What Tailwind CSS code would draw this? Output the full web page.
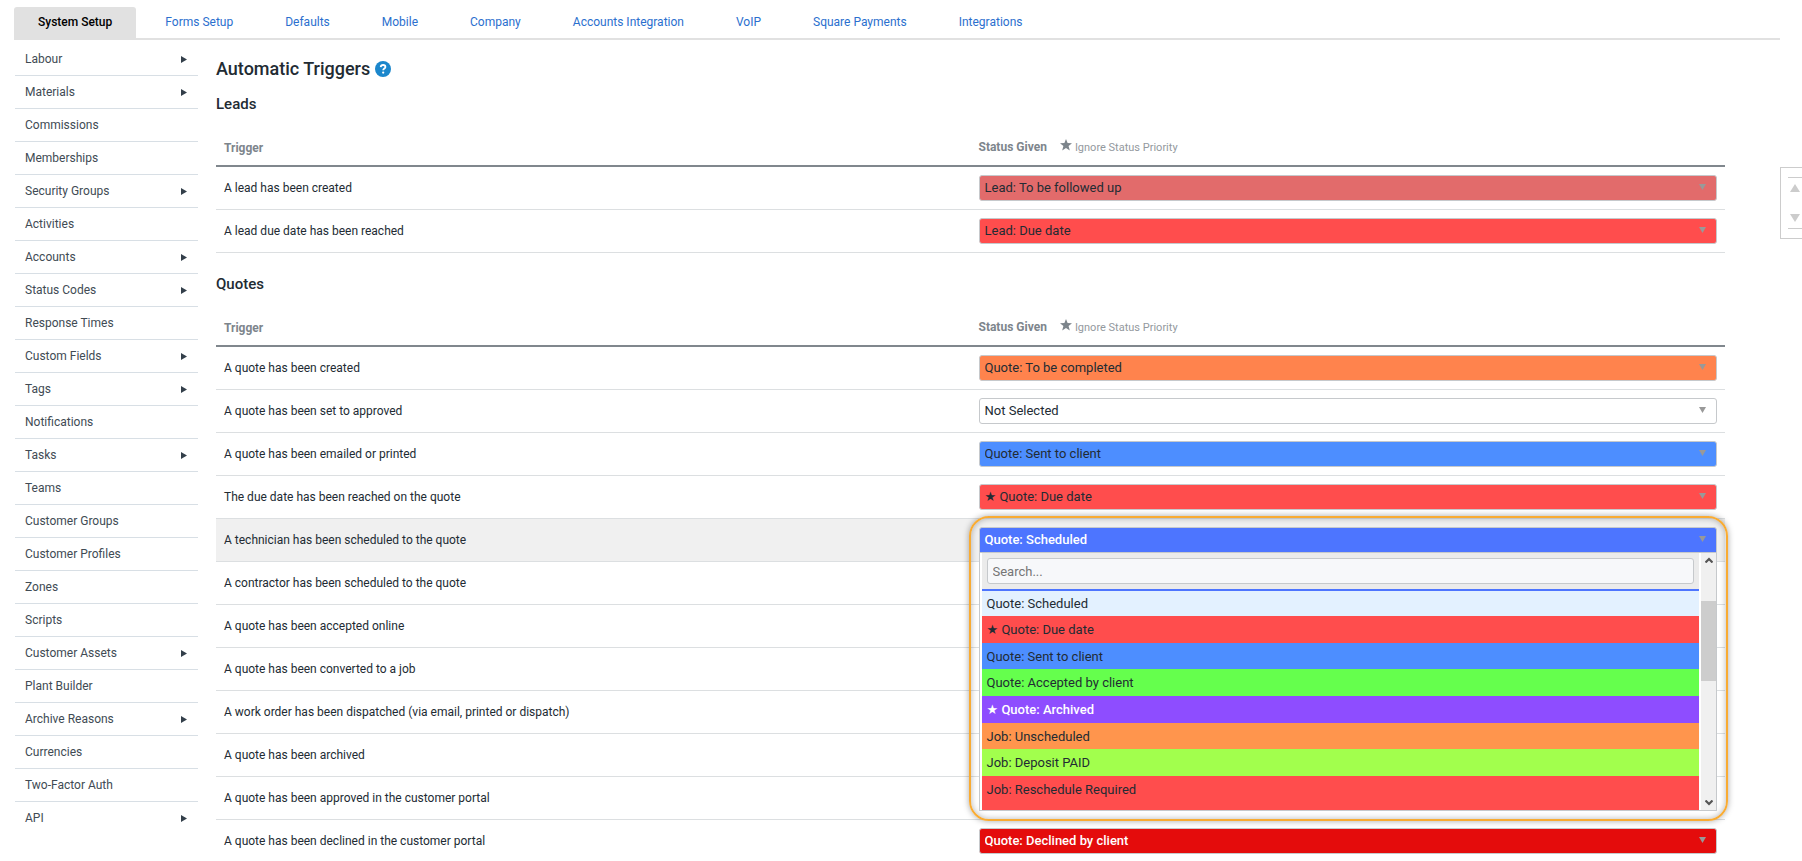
<!DOCTYPE html>
<html lang="en">
<head>
<meta charset="utf-8">
<title>System Setup - Automatic Triggers</title>
<script src="https://cdn.jsdelivr.net/npm/@tailwindcss/browser@4"></script>
</head>
<body class="relative h-screen overflow-hidden bg-white font-[Roboto,'DejaVu_Sans',sans-serif] text-xs text-[#222b33]">
<svg class="hidden">
  <symbol id="down" viewBox="0 0 7 6"><path d="M0 0h7L3.5 6z" fill="#999"/></symbol>
  <symbol id="right" viewBox="0 0 6 7"><path d="M0 0l6 3.5L0 7z" fill="#333f4a"/></symbol>
  <symbol id="star" viewBox="0 0 12 12"><path d="M6 0l1.6 4.1 4.4.2-3.4 2.8L9.8 11.500 6 9 2.200 11.500l1.200-4.400L0 4.300l4.400-.2z" fill="#7d858c"/></symbol>
</svg>

<nav class="mr-[22px] ml-3.5 flex gap-1.5 border-b-2 border-[#e1e1e1] pt-[7px] leading-[31px] text-[#2b6fce]">
  <a href="#" class="rounded-t-[3px] bg-[#e1e1e1] px-6 font-medium text-black">System Setup</a>
  <a href="#" class="px-[23px]">Forms Setup</a>
  <a href="#" class="px-[23px]">Defaults</a>
  <a href="#" class="px-[23px]">Mobile</a>
  <a href="#" class="px-[23px]">Company</a>
  <a href="#" class="px-[23px]">Accounts Integration</a>
  <a href="#" class="px-[23px]">VoIP</a>
  <a href="#" class="px-[23px]">Square Payments</a>
  <a href="#" class="px-[23px]">Integrations</a>
</nav>

<div class="flex">
  <aside class="ml-[15px] w-[183px] shrink-0 pt-[3px] text-[#414b54] [&_a]:flex [&_a]:h-[33px] [&_a]:items-center [&_a]:justify-between [&_a]:border-b [&_a]:border-[#d8dfe5] [&_a]:pr-[11px] [&_a]:pl-2.5 [&_a:last-child]:border-transparent [&_svg]:h-[7px] [&_svg]:w-1.5">
    <a href="#">Labour<svg><use href="#right"/></svg></a>
    <a href="#">Materials<svg><use href="#right"/></svg></a>
    <a href="#">Commissions</a>
    <a href="#">Memberships</a>
    <a href="#">Security Groups<svg><use href="#right"/></svg></a>
    <a href="#">Activities</a>
    <a href="#">Accounts<svg><use href="#right"/></svg></a>
    <a href="#">Status Codes<svg><use href="#right"/></svg></a>
    <a href="#">Response Times</a>
    <a href="#">Custom Fields<svg><use href="#right"/></svg></a>
    <a href="#">Tags<svg><use href="#right"/></svg></a>
    <a href="#">Notifications</a>
    <a href="#">Tasks<svg><use href="#right"/></svg></a>
    <a href="#">Teams</a>
    <a href="#">Customer Groups</a>
    <a href="#">Customer Profiles</a>
    <a href="#">Zones</a>
    <a href="#">Scripts</a>
    <a href="#">Customer Assets<svg><use href="#right"/></svg></a>
    <a href="#">Plant Builder</a>
    <a href="#">Archive Reasons<svg><use href="#right"/></svg></a>
    <a href="#">Currencies</a>
    <a href="#">Two-Factor Auth</a>
    <a href="#">API<svg><use href="#right"/></svg></a>
  </aside>

  <main class="mr-[77px] ml-[18px] grow pt-[15px] [&_table]:w-full [&_table]:table-fixed [&_table]:border-separate [&_table]:border-spacing-0 [&_td]:h-[43px] [&_td]:border-b [&_td]:border-[#dcdfe1] [&_td]:px-2 [&_th]:h-[39px] [&_th]:border-b-2 [&_th]:border-[#80878d] [&_th]:px-2 [&_th]:pt-0.5 [&_th]:text-left [&_th]:font-bold [&_th]:text-[#7d858c] [&_select]:block [&_select]:h-[26px] [&_select]:w-full [&_select]:appearance-none [&_select]:rounded-[3px] [&_select]:border [&_select]:border-[#c6c9cc] [&_select]:pl-[5px] [&_select]:text-[13px] [&_label]:relative [&_label]:block [&_label_svg]:absolute [&_label_svg]:top-[9px] [&_label_svg]:right-[11px] [&_label_svg]:h-1.5 [&_label_svg]:w-[7px]">
    <h1 class="flex items-center gap-[5px] text-lg leading-7 font-medium">Automatic Triggers
      <button type="button" aria-label="Help"><svg class="size-4" viewBox="0 0 16 16"><circle cx="8" cy="8" r="8" fill="#1b87cc"/><path d="M5.700 6.100C5.800 4.700 6.800 4 8.100 4c1.400 0 2.300.8 2.300 1.900 0 1.600-2.200 1.700-2.200 3.400" fill="none" stroke="#fff" stroke-width="1.800"/><circle cx="8.200" cy="11.600" r="1.150" fill="#fff"/></svg></button>
    </h1>

    <section class="mt-[9px]">
      <h2 class="text-[15px] leading-6 font-medium">Leads</h2>
      <table class="mt-3">
        <thead><tr><th>Trigger</th><th><div class="flex items-baseline">Status Given<svg class="ml-[13px] size-3"><use href="#star"/></svg><span class="ml-[3px] text-[11px] leading-4 font-normal text-[#93999e]">Ignore Status Priority</span></div></th></tr></thead>
        <tbody>
          <tr><td>A lead has been created</td><td><label><select aria-label="A lead has been created" class="bg-[#e26b6b]"><option>Lead: To be followed up</option></select><svg><use href="#down"/></svg></label></td></tr>
          <tr><td>A lead due date has been reached</td><td><label><select aria-label="A lead due date has been reached" class="bg-[#ff4d4d]"><option>Lead: Due date</option></select><svg><use href="#down"/></svg></label></td></tr>
        </tbody>
      </table>
    </section>

    <section class="mt-[19px]">
      <h2 class="text-[15px] leading-6 font-medium">Quotes</h2>
      <table class="mt-3">
        <thead><tr><th>Trigger</th><th><div class="flex items-baseline">Status Given<svg class="ml-[13px] size-3"><use href="#star"/></svg><span class="ml-[3px] text-[11px] leading-4 font-normal text-[#93999e]">Ignore Status Priority</span></div></th></tr></thead>
        <tbody>
          <tr><td>A quote has been created</td><td><label><select aria-label="A quote has been created" class="bg-[#ff834d]"><option>Quote: To be completed</option></select><svg><use href="#down"/></svg></label></td></tr>
          <tr><td>A quote has been set to approved</td><td><label><select aria-label="A quote has been set to approved" class="bg-white"><option>Not Selected</option></select><svg><use href="#down"/></svg></label></td></tr>
          <tr><td>A quote has been emailed or printed</td><td><label><select aria-label="A quote has been emailed or printed" class="bg-[#4d8eff]"><option>Quote: Sent to client</option></select><svg><use href="#down"/></svg></label></td></tr>
          <tr><td>The due date has been reached on the quote</td><td><label><select aria-label="The due date has been reached on the quote" class="bg-[#ff4d4d]"><option>★ Quote: Due date</option></select><svg><use href="#down"/></svg></label></td></tr>
          <tr class="bg-[#f0f0f0]"><td>A technician has been scheduled to the quote</td><td>
            <div class="relative h-[26px]">
              <!-- highlight frame around the open menu -->
              <div class="absolute -top-[11px] -right-[11px] -left-[10px] h-[305px] rounded-[20px] border-2 border-[#f9ab32] shadow-[0_0_6px_rgba(0,0,0,0.35),inset_0_0_6px_rgba(0,0,0,0.3)]"></div>
              <div class="absolute inset-x-0 top-0 text-[13px]">
                <button type="button" aria-haspopup="listbox" aria-expanded="true" class="flex h-[26px] w-full items-center justify-between rounded-t-[3px] border border-[#c6c9cc] bg-[#4d75ff] pr-2.5 pl-[5px] font-medium text-white">Quote: Scheduled<svg class="mb-0.5 h-1.5 w-[7px]"><use href="#down"/></svg></button>
                <div class="flex border border-t-0 border-[#c6c9cc] bg-white">
                  <div class="mx-0.5 grow">
                    <div class="border-b-2 border-[#4d75ff] bg-[#ebebeb] px-[5px] pt-[5px] pb-[5px]">
                      <input type="text" aria-label="Search" placeholder="Search..." class="block h-[26px] w-full rounded-[3px] border border-[#c6c9cc] bg-[#f7f8fa] px-[5px] placeholder:text-[#757575]">
                    </div>
                    <ul role="listbox" aria-label="Status" class="[&>li]:h-[27px] [&>li]:px-[5px] [&>li]:leading-7">
                      <li role="option" aria-selected="true" class="h-[25px]! bg-[#e3f1ff] leading-[25px]!">Quote: Scheduled</li>
                      <li role="option" class="bg-[#ff4d4d]">★ Quote: Due date</li>
                      <li role="option" class="h-[26px]! bg-[#4d8eff]">Quote: Sent to client</li>
                      <li role="option" class="bg-[#65ff4d]">Quote: Accepted by client</li>
                      <li role="option" class="bg-[#8e4dff] font-medium text-white">★ Quote: Archived</li>
                      <li role="option" class="h-[26px]! bg-[#ff954d]">Job: Unscheduled</li>
                      <li role="option" class="bg-[#a2ff4d]">Job: Deposit PAID</li>
                      <li role="option" class="h-[34px]! bg-[#ff4d4d]">Job: Reschedule Required</li>
                    </ul>
                  </div>
                  <div class="flex w-[15px] flex-col items-center bg-[#f0f0f0]">
                    <svg class="mt-1 h-[6px] w-2 shrink-0" viewBox="0 0 8 6"><path d="M.5 5.500L4 2l3.500 3.500" fill="none" stroke="#555" stroke-width="2.200"/></svg>
                    <div class="mt-[38px] h-20 w-full bg-[#cdcdcd]"></div>
                    <svg class="mt-auto mb-1 h-[6px] w-2 shrink-0" viewBox="0 0 8 6"><path d="M.5.5L4 4 7.500.5" fill="none" stroke="#555" stroke-width="2.200"/></svg>
                  </div>
                </div>
              </div>
            </div>
          </td></tr>
          <tr><td>A contractor has been scheduled to the quote</td><td></td></tr>
          <tr><td>A quote has been accepted online</td><td></td></tr>
          <tr><td>A quote has been converted to a job</td><td></td></tr>
          <tr><td>A work order has been dispatched (via email, printed or dispatch)</td><td></td></tr>
          <tr><td>A quote has been archived</td><td></td></tr>
          <tr><td>A quote has been approved in the customer portal</td><td></td></tr>
          <tr><td>A quote has been declined in the customer portal</td><td><label><select aria-label="A quote has been declined in the customer portal" class="bg-[#e40c0c] font-medium text-white"><option>Quote: Declined by client</option></select><svg><use href="#down"/></svg></label></td></tr>
        </tbody>
      </table>
    </section>
  </main>
</div>

<!-- scroll helper docked to the window edge -->
<div class="absolute top-[167px] right-0 flex h-[72px] w-[22px] flex-col border-y border-l border-[#ccc] bg-white py-[9px] pl-[7px]">
  <div class="flex grow flex-col justify-between border-y border-[#ccc] px-0.5 pt-1.5 pb-1.5">
    <button type="button" aria-label="Scroll up"><svg class="h-2 w-2.5" viewBox="0 0 10 8"><path d="M5 0l5 8H0z" fill="#ccc"/></svg></button>
    <button type="button" aria-label="Scroll down"><svg class="h-2 w-2.5" viewBox="0 0 10 8"><path d="M0 0h10L5 8z" fill="#ccc"/></svg></button>
  </div>
</div>
</body>
</html>
